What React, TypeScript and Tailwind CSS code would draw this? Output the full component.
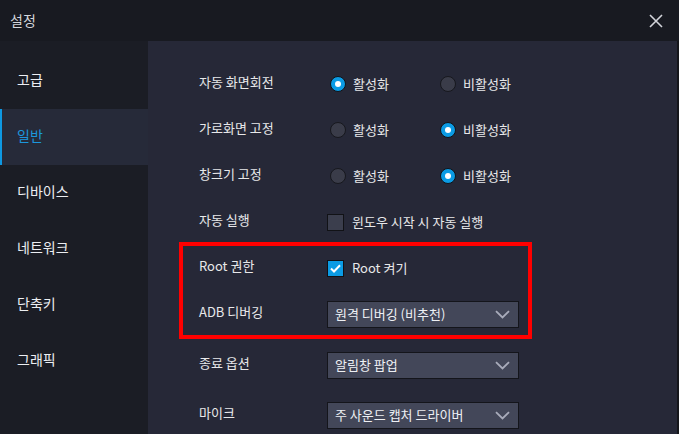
import React from "react";

const font = { fontFamily: '"Noto Sans CJK KR", "Noto Sans", sans-serif' };

function Radio({ on }: { on: boolean }) {
  return on ? (
    <span className="flex h-[16px] w-[16px] items-center justify-center rounded-full border border-[#111318] bg-[#0b9be4]">
      <span className="h-[6px] w-[6px] rounded-full bg-white" />
    </span>
  ) : (
    <span className="h-[16px] w-[16px] rounded-full border border-[#17181e] bg-[#3a3c49]" />
  );
}

function RadioRow({ label, first }: { label: string; first: boolean }) {
  return (
    <div className="flex h-[46px] items-center">
      <div className="mb-[4px] w-[131px] text-[#e8e8ea]">{label}</div>
      <div className="flex w-[110px] items-center gap-[7px]">
        <Radio on={first} />
        <span className="text-[#e8e8ea]">활성화</span>
      </div>
      <div className="flex items-center gap-[7px]">
        <Radio on={!first} />
        <span className="text-[#e8e8ea]">비활성화</span>
      </div>
    </div>
  );
}

function Chevron() {
  return (
    <svg width="15" height="9" viewBox="0 0 15 9" fill="none">
      <path d="M1 1.2 L7.5 7.5 L14 1.2" stroke="#a9acbb" strokeWidth="1.8" />
    </svg>
  );
}

function Select({ value }: { value: string }) {
  return (
    <div className="flex h-[27px] w-[192px] items-center justify-between border border-[#14151b] bg-[#434759] pl-[7px] pr-[8px]">
      <span className="text-[#eef0f4]">{value}</span>
      <Chevron />
    </div>
  );
}

function SelectRow({ label, value, h }: { label: string; value: string; h: string }) {
  return (
    <div className={`flex items-center ${h}`}>
      <div className="mb-[4px] w-[128px] text-[#e8e8ea]">{label}</div>
      <Select value={value} />
    </div>
  );
}

export default function App() {
  const nav = ["고급", "일반", "디바이스", "네트워크", "단축키", "그래픽"];
  return (
    <div style={font} className="flex h-[434px] w-[679px] flex-col overflow-hidden bg-[#181a21]">
      <div className="flex h-[41px] shrink-0 items-center justify-between pl-[10px] pr-[16px]">
        <span className="text-[14px] text-[#d4d6dc]">설정</span>
        <svg width="14" height="14" viewBox="0 0 14 14" fill="none">
          <path d="M1 1 L13 13 M13 1 L1 13" stroke="#d2d4da" strokeWidth="1.6" />
        </svg>
      </div>
      <div className="flex min-h-0 flex-1">
        <div className="w-[148px] shrink-0 bg-[#1b1d25] pt-[12px]">
          {nav.map((n, i) => (
            <div
              key={n}
              className={
                i === 1
                  ? "flex h-[56px] items-center border-l-2 border-[#0e98e2] bg-[#262a39] pb-[4px] pl-[15px] text-[14px] text-[#1c96dc]"
                  : "flex h-[56px] items-center pb-[4px] pl-[17px] text-[14px] text-[#eceef2]"
              }
            >
              {n}
            </div>
          ))}
        </div>
        <div className="flex-1 border-r-2 border-[#15161b] bg-[#262837] pl-[51px] pt-[20px] text-[13px]">
          <RadioRow label="자동 화면회전" first={true} />
          <RadioRow label="가로화면 고정" first={false} />
          <RadioRow label="창크기 고정" first={false} />
          <div className="flex h-[46px] items-center">
            <div className="mb-[4px] w-[128px] text-[#e8e8ea]">자동 실행</div>
            <span className="h-[17px] w-[17px] border border-[#111216] bg-[#3b3e4d]" />
            <span className="ml-[8px] text-[#e8e8ea]">윈도우 시작 시 자동 실행</span>
          </div>
          <div className="relative">
            <div className="pointer-events-none absolute left-[-20px] top-[-3px] h-[97px] w-[353px] border-4 border-[#ff0000]" />
            <div className="flex h-[46px] items-center">
              <div className="mb-[4px] w-[128px] text-[#e8e8ea]">Root 권한</div>
              <span className="flex h-[17px] w-[17px] items-center justify-center border border-[#111216] bg-[#0b9be4]">
                <svg width="11" height="9" viewBox="0 0 11 9" fill="none">
                  <path d="M1 4.5 L4 7.5 L10 1.2" stroke="white" strokeWidth="2" />
                </svg>
              </span>
              <span className="ml-[8px] text-[#e8e8ea]">Root 켜기</span>
            </div>
            <SelectRow label="ADB 디버깅" value="원격 디버깅 (비추천)" h="h-[46px]" />
          </div>
          <div className="mt-[3px]">
            <SelectRow label="종료 옵션" value="알림창 팝업" h="h-[50px]" />
            <SelectRow label="마이크" value="주 사운드 캡처 드라이버" h="h-[50px]" />
          </div>
        </div>
      </div>
    </div>
  );
}
